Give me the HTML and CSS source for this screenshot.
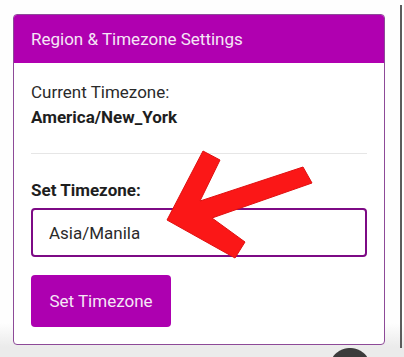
FILE: index.html
```html
<!DOCTYPE html>
<html>
<head>
<meta charset="utf-8">
<link rel="stylesheet" href="styles.css">
</head>
<body>
<div class="shade"></div>
<div class="card">
  <div class="card-header">Region &amp; Timezone Settings</div>
  <div class="card-body">
    <div class="line">Current Timezone:</div>
    <div class="line strong">America/New_York</div>
    <hr class="sep">
    <label class="line strong label" for="tz">Set Timezone:</label>
    <input id="tz" class="field" type="text" value="Asia/Manila">
    <button class="btn">Set Timezone</button>
  </div>
</div>
<svg class="arrow" width="404" height="357" viewBox="0 0 404 357">
  <polygon points="167,220 203,151 220,160 200,201 303,167 312,183 212,218 245,242 235,258" fill="#fb1717" stroke="#e01010" stroke-width="1" stroke-linejoin="miter"/>
</svg>
<div class="edge"></div>
<div class="dot"></div>
</body>
</html>
```
FILE: styles.css
```css
html, body {
  margin: 0;
  padding: 0;
}
body {
  width: 404px;
  height: 357px;
  overflow: hidden;
  position: relative;
  background: #fefefe;
  font-family: Roboto, "Liberation Sans", sans-serif;
  color: #222;
}
.shade {
  position: absolute;
  left: 0;
  right: 0;
  bottom: 0;
  height: 34px;
  background: linear-gradient(#fefefe00, #ebebeb 70%);
}
.card {
  position: relative;
  margin: 14px 0 0 13px;
  width: 372px;
  box-sizing: border-box;
  border: 1px solid #8d4a98;
  border-radius: 4px;
  background: #fff;
  overflow: hidden;
}
.card-header {
  height: 48px;
  line-height: 48px;
  background: #b000b0;
  color: #f6e6f6;
  font-size: 17px;
  padding-left: 17px;
}
.card-body {
  padding: 17px 17px 17px;
  display: flex;
  flex-direction: column;
  align-items: flex-start;
}
.line {
  font-size: 17px;
  line-height: 25px;
  display: block;
  color: #2a2a2a;
}
.strong {
  font-weight: bold;
  color: #1e1e1e;
}
.sep {
  align-self: stretch;
  border: 0;
  border-top: 1px solid #e6e6e6;
  margin: 23px 0 24px;
  height: 0;
}
.label {
  margin-bottom: 5px;
}
.field {
  align-self: stretch;
  box-sizing: border-box;
  height: 49px;
  border: 2px solid #7d0a85;
  border-radius: 4px;
  padding: 0 16px;
  font-family: Roboto, "Liberation Sans", sans-serif;
  font-size: 17px;
  color: #2a2a2a;
  background: #fff;
  outline: none;
}
.btn {
  margin-top: 18px;
  width: 140px;
  height: 52px;
  border: 0;
  border-radius: 4px;
  background: #ad00b0;
  color: #f6e6f6;
  font-family: Roboto, "Liberation Sans", sans-serif;
  font-size: 17px;
  padding: 0;
}
.arrow {
  position: absolute;
  left: 0;
  top: 0;
}
.edge {
  position: absolute;
  left: 400px;
  top: 5px;
  width: 2px;
  height: 343px;
  background: #5c5c5c;
}
.dot {
  position: absolute;
  left: 329px;
  top: 348px;
  width: 42px;
  height: 9px;
  background: radial-gradient(circle at 50% 21px, #3b3b3b 20.5px, rgba(59, 59, 59, 0) 21.5px);
}
```
